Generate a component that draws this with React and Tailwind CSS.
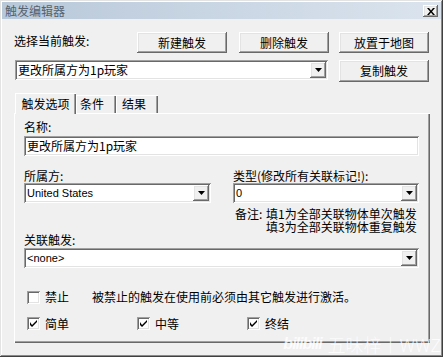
import React from "react";

const raised =
  "bg-[#f0f0f0] shadow-[inset_-1px_-1px_0_#696969,inset_1px_1px_0_#ffffff,inset_-2px_-2px_0_#a0a0a0,inset_2px_2px_0_#e3e3e3]";
const sunken =
  "bg-white shadow-[inset_1px_1px_0_#a0a0a0,inset_-1px_-1px_0_#ffffff,inset_2px_2px_0_#696969,inset_-2px_-2px_0_#e3e3e3]";

function Button({ children, className = "" }) {
  return (
    <div className={`${raised} flex items-center justify-center w-[90px] leading-[14px] ${className}`}>
      {children}
    </div>
  );
}

function Arrow() {
  return (
    <div className={`${raised} w-[16px] h-[16px] flex items-center justify-center shrink-0`}>
      <svg width="7" height="4" viewBox="0 0 7 4">
        <path d="M0 0h7L3.5 4z" fill="#000" />
      </svg>
    </div>
  );
}

function Combo({ value, className = "", latin = false }) {
  return (
    <div className={`${sunken} h-[20px] flex items-center pl-[3px] pr-[2px] ${className}`}>
      <span
        className={`flex-1 leading-[16px] whitespace-nowrap ${
          latin ? "font-['Liberation_Sans',sans-serif] text-[11px]" : ""
        }`}
      >
        {value}
      </span>
      <Arrow />
    </div>
  );
}

function Check({ checked, label, className = "" }) {
  return (
    <div className={`flex items-center h-[13px] ${className}`}>
      <div className={`${sunken} w-[13px] h-[13px] flex items-center justify-center`}>
        {checked && (
          <svg width="7" height="7" viewBox="0 0 7 7">
            <path d="M0 2v3l2 2 5-5V0L2 5z" fill="#000" />
          </svg>
        )}
      </div>
      <span className="ml-[5px] leading-[14px]">{label}</span>
    </div>
  );
}

export default function App() {
  return (
    <div className="relative w-[443px] h-[357px] overflow-hidden bg-[#f0f0f0] p-[2px] font-['Noto_Sans_CJK_SC',sans-serif] text-[12px] text-black shadow-[inset_-1px_-1px_0_#404040,inset_1px_1px_0_#e3e3e3,inset_-2px_-2px_0_#8a8a8a,inset_2px_2px_0_#ffffff]">
      {/* title bar */}
      <div className="h-[17px] flex items-center justify-between pl-[3px] pr-[3px] bg-gradient-to-r from-[#b8c8d9] to-[#dbe4ee]">
        <span className="text-[#56626f] leading-[14px]">触发编辑器</span>
        <div className={`${raised} w-[15px] h-[12px] flex items-center justify-center mt-[1px]`}>
          <svg width="8" height="7" viewBox="0 0 8 7">
            <path d="M0 0h2l2 2.5L6 0h2L5 3.5 8 7H6L4 4.5 2 7H0l3-3.5z" fill="#000" />
          </svg>
        </div>
      </div>

      <div className="pl-[12px] pt-[13px]">
        {/* row 1 */}
        <div className="flex items-start">
          <span className="w-[123px] pt-[2px] leading-[14px]">选择当前触发:</span>
          <Button className="h-[21px]">新建触发</Button>
          <Button className="h-[21px] ml-[12px]">删除触发</Button>
          <Button className="h-[21px] ml-[10px]">放置于地图</Button>
        </div>

        {/* row 2 */}
        <div className="flex items-start mt-[7px]">
          <Combo value="更改所属方为1p玩家" className="ml-[1px] w-[313px]" />
          <Button className="h-[22px] ml-[11px]">复制触发</Button>
        </div>

        {/* tabs */}
        <div className="flex items-end h-[21px] mt-[11px] ml-[1px] relative z-10">
          <div className="w-[61px] h-[21px] bg-[#f0f0f0] flex items-start justify-center pt-[4px] leading-[14px] shadow-[inset_1px_1px_0_#ffffff,inset_-1px_0_0_#696969,inset_-2px_0_0_#a0a0a0]">
            触发选项
          </div>
          <div className="w-[40px] h-[18px] mb-[1px] pl-[4px] pt-[2px] leading-[14px] shadow-[inset_1px_1px_0_#ffffff,inset_-1px_0_0_#696969,inset_-2px_0_0_#a0a0a0]">
            条件
          </div>
          <div className="w-[42px] h-[18px] mb-[1px] pl-[6px] pt-[2px] leading-[14px] shadow-[inset_1px_1px_0_#ffffff,inset_-1px_0_0_#696969,inset_-2px_0_0_#a0a0a0]">
            结果
          </div>
        </div>

        {/* panel */}
        <div className="-mt-[1px] w-[416px] h-[230px] pl-[10px] pt-[7px] shadow-[inset_1px_1px_0_#ffffff,inset_-1px_-1px_0_#696969,inset_-2px_-2px_0_#a0a0a0]">
          <div className="leading-[14px]">名称:</div>
          <div className={`${sunken} w-[395px] h-[20px] mt-[2px] pl-[3px] flex items-center leading-[14px]`}>
            更改所属方为1p玩家
          </div>

          <div className="flex mt-[13px]">
            <div className="w-[187px]">
              <div className="leading-[14px]">所属方:</div>
              <Combo value="United States" latin className="w-[187px]" />
            </div>
            <div className="w-[186px] ml-[22px]">
              <div className="leading-[14px]">类型(修改所有关联标记!):</div>
              <Combo value="0" latin className="w-[186px]" />
              <div className="flex mt-[4px] ml-[2px] leading-[13px]">
                <span className="w-[31px]">备注:</span>
                <div className="flex flex-col">
                  <span>填1为全部关联物体单次触发</span>
                  <span>填3为全部关联物体重复触发</span>
                </div>
              </div>
            </div>
          </div>

          <div className="leading-[14px]">关联触发:</div>
          <Combo value="<none>" latin className="w-[395px] mt-[1px]" />

          <div className="flex items-center mt-[22px] ml-[3px]">
            <Check label="禁止" className="w-[65px]" />
            <span className="leading-[14px]">被禁止的触发在使用前必须由其它触发进行激活。</span>
          </div>
          <div className="flex items-center mt-[13px] ml-[3px]">
            <Check checked label="简单" className="w-[110px]" />
            <Check checked label="中等" className="w-[110px]" />
            <Check checked label="终结" />
          </div>
        </div>
      </div>

      {/* watermark */}
      <div className="absolute right-[2px] bottom-[2px] flex items-end gap-[6px] text-white opacity-80 leading-[22px] pointer-events-none">
        <span className="font-['Liberation_Sans',sans-serif] italic font-bold text-[16px] tracking-[-1px]">bilibili</span>
        <span className="font-['Noto_Sans_CJK_SC',sans-serif] text-[18px] font-light">五味梓丨WWZ</span>
      </div>
    </div>
  );
}
